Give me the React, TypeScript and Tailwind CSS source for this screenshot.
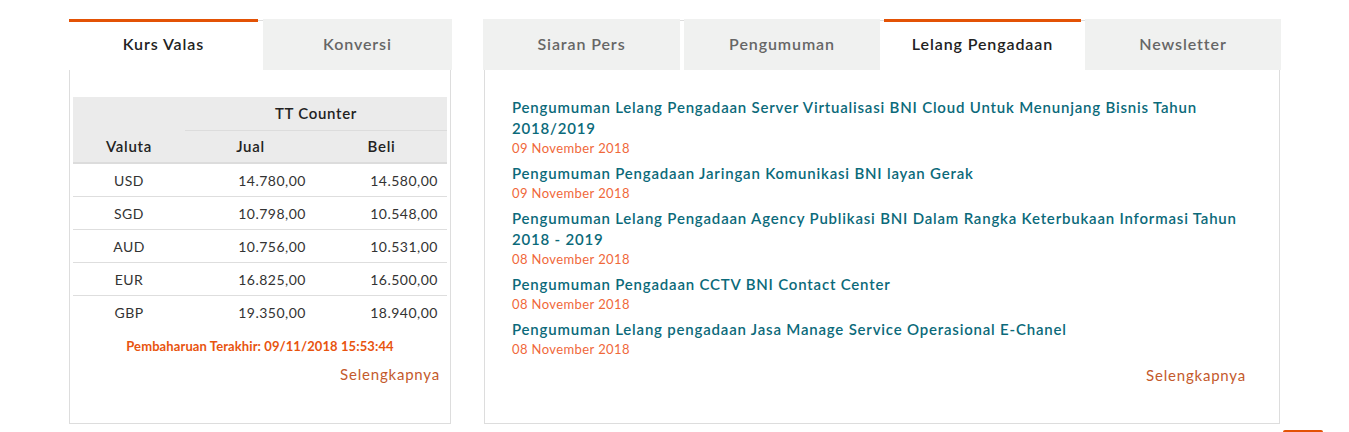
import React from "react";

const rates = [
  ["USD", "14.780,00", "14.580,00"],
  ["SGD", "10.798,00", "10.548,00"],
  ["AUD", "10.756,00", "10.531,00"],
  ["EUR", "16.825,00", "16.500,00"],
  ["GBP", "19.350,00", "18.940,00"],
];

const news = [
  ["Pengumuman Lelang Pengadaan Server Virtualisasi BNI Cloud Untuk Menunjang Bisnis Tahun 2018/2019", "09 November 2018"],
  ["Pengumuman Pengadaan Jaringan Komunikasi BNI layan Gerak", "09 November 2018"],
  ["Pengumuman Lelang Pengadaan Agency Publikasi BNI Dalam Rangka Keterbukaan Informasi Tahun 2018 - 2019", "08 November 2018"],
  ["Pengumuman Pengadaan CCTV BNI Contact Center", "08 November 2018"],
  ["Pengumuman Lelang pengadaan Jasa Manage Service Operasional E-Chanel", "08 November 2018"],
];

function Tab({ label, active, className = "" }: { label: string; active?: boolean; className?: string }) {
  return active ? (
    <div className={`h-[51px] border-t-[3px] border-[#e35205] bg-white pb-[4px] flex items-center justify-center text-[16px] tracking-[0.9px] font-semibold text-[#222] ${className}`}>
      {label}
    </div>
  ) : (
    <div className={`h-[51px] bg-[#f0f1f0] pb-[2px] flex items-center justify-center text-[16px] tracking-[0.9px] font-semibold text-[#666] ${className}`}>
      {label}
    </div>
  );
}

export default function App() {
  return (
    <div className="relative w-[1349px] h-[432px] bg-white overflow-hidden font-['Lato',sans-serif]">
      <div className="w-[1211px] mx-auto pt-[19px] flex gap-[33px]">
        {/* Left panel */}
        <div className="w-[382px] flex flex-col">
          <div className="flex items-start">
            <Tab label="Kurs Valas" active className="w-[189px]" />
            <div className="w-[5px] mt-[1px] border-t border-[#ddd]" />
            <Tab label="Konversi" className="flex-1 -mr-[1px]" />
          </div>
          <div className="h-[354px] border border-t-0 border-[#ddd] px-[3px] pt-[27px] flex flex-col">
            <table className="w-full border-collapse text-[14px] tracking-[0.5px] text-[#333]">
              <thead>
                <tr className="bg-[#ebebeb]">
                  <th className="w-[112px] h-[33px]"></th>
                  <th colSpan={2} className="h-[33px] text-[15px] tracking-[0.7px] font-semibold text-[#222] border-b border-[#dcdcdc]">
                    TT Counter
                  </th>
                </tr>
                <tr className="bg-[#ebebeb] border-b-2 border-[#dcdcdc]">
                  <th className="h-[33px] text-[15px] tracking-[0.7px] font-semibold text-[#222]">Valuta</th>
                  <th className="w-[131px] h-[33px] text-[15px] tracking-[0.7px] font-semibold text-[#222]">Jual</th>
                  <th className="w-[131px] h-[33px] text-[15px] tracking-[0.7px] font-semibold text-[#222]">Beli</th>
                </tr>
              </thead>
              <tbody>
                {rates.map((r, i) => (
                  <tr key={r[0]} className={i < rates.length - 1 ? "border-b border-[#dedede]" : ""}>
                    <td className="h-[33px] pt-[1px] text-center">{r[0]}</td>
                    <td className="h-[33px] pt-[1px] text-right pr-[10px]">{r[1]}</td>
                    <td className="h-[33px] pt-[1px] text-right pr-[9px]">{r[2]}</td>
                  </tr>
                ))}
              </tbody>
            </table>
            <div className="mt-[9px] text-center text-[13px] tracking-[0.1px] font-bold text-[#e8540f] leading-[18px]">
              Pembaharuan Terakhir: 09/11/2018 15:53:44
            </div>
            <div className="mt-[9px] text-right text-[15px] tracking-[0.8px] text-[#c45a2c] leading-[20px] pr-[7px]">
              Selengkapnya
            </div>
          </div>
        </div>

        {/* Right panel */}
        <div className="w-[796px] flex flex-col">
          <div className="flex items-start -ml-[1px] -mr-[1px]">
            <Tab label="Siaran Pers" className="w-[197px]" />
            <div className="w-[4px] mt-[1px] border-t border-[#ddd]" />
            <Tab label="Pengumuman" className="w-[196px]" />
            <div className="w-[4px] mt-[1px] border-t border-[#ddd]" />
            <Tab label="Lelang Pengadaan" active className="w-[197px]" />
            <div className="w-[4px] mt-[1px] border-t border-[#ddd]" />
            <Tab label="Newsletter" className="flex-1" />
          </div>
          <div className="h-[354px] border border-t-0 border-[#ddd] pl-[27px] pr-[33px] pt-[27px] flex flex-col">
            {news.map(([t, d]) => (
              <div key={t} className="mb-[6px]">
                <div className="text-[15px] leading-[21px] tracking-[0.8px] font-semibold text-[#0b6a7a]">{t}</div>
                <div className="text-[13px] leading-[18px] tracking-[0.4px] text-[#f0683a]">{d}</div>
              </div>
            ))}
            <div className="mt-[1px] text-right text-[15px] tracking-[0.8px] text-[#c45a2c] leading-[20px]">Selengkapnya</div>
          </div>
        </div>
      </div>
      <div className="absolute left-[1283px] top-[430px] w-[40px] h-[2px] rounded-t-[2px] bg-[#e35205]" />
    </div>
  );
}
